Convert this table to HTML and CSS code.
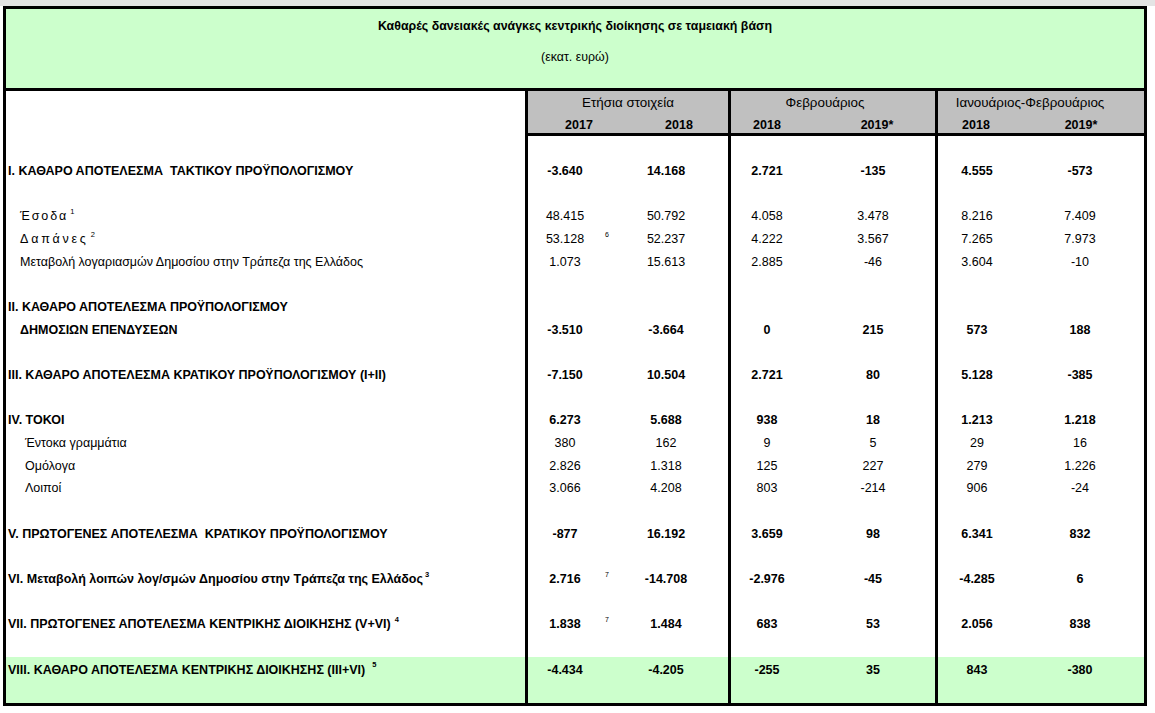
FILE: index.html
```html
<!DOCTYPE html>
<html lang="el">
<head>
<meta charset="utf-8">
<title>Καθαρές δανειακές ανάγκες κεντρικής διοίκησης</title>
<link rel="stylesheet" href="styles.css">
</head>
<body>
<div class="topbar"></div>
<div class="sheet">
  <div class="title">
    <div class="title-main">Καθαρές δανειακές ανάγκες κεντρικής διοίκησης σε ταμειακή βάση</div>
    <div class="title-sub">(εκατ. ευρώ)</div>
  </div>

  <div class="row head">
    <div class="lbl"></div>
    <div class="grp g1">
      <div class="grp-name">Ετήσια στοιχεία</div>
      <div class="years"><span class="y1">2017</span><span class="y2">2018</span></div>
    </div>
    <div class="grp g2">
      <div class="grp-name">Φεβρουάριος</div>
      <div class="years"><span class="y1">2018</span><span class="y2">2019*</span></div>
    </div>
    <div class="grp g3">
      <div class="grp-name">Ιανουάριος-Φεβρουάριος</div>
      <div class="years"><span class="y1">2018</span><span class="y2">2019*</span></div>
    </div>
  </div>

  <div class="tbody">
    <div class="row"><div class="lbl"></div><div class="n s"></div><div class="fn"></div><div class="n cb"></div><div class="n s"></div><div class="n cd"></div><div class="n s"></div><div class="n"></div></div>

    <div class="row bold"><div class="lbl">I. ΚΑΘΑΡΟ ΑΠΟΤΕΛΕΣΜΑ&nbsp; ΤΑΚΤΙΚΟΥ ΠΡΟΫΠΟΛΟΓΙΣΜΟΥ</div><div class="n s">-3.640</div><div class="fn"></div><div class="n cb">14.168</div><div class="n s">2.721</div><div class="n cd">-135</div><div class="n s">4.555</div><div class="n">-573</div></div>

    <div class="row"><div class="lbl"></div><div class="n s"></div><div class="fn"></div><div class="n cb"></div><div class="n s"></div><div class="n cd"></div><div class="n s"></div><div class="n"></div></div>

    <div class="row"><div class="lbl ind1"><span class="sp1">Έσοδα</span><sup class="sup">1</sup></div><div class="n s">48.415</div><div class="fn"></div><div class="n cb">50.792</div><div class="n s">4.058</div><div class="n cd">3.478</div><div class="n s">8.216</div><div class="n">7.409</div></div>

    <div class="row"><div class="lbl ind1"><span class="sp2">Δαπάνες</span><sup class="sup">2</sup></div><div class="n s">53.128</div><div class="fn"><sup class="fnote">6</sup></div><div class="n cb">52.237</div><div class="n s">4.222</div><div class="n cd">3.567</div><div class="n s">7.265</div><div class="n">7.973</div></div>

    <div class="row"><div class="lbl ind1">Μεταβολή λογαριασμών Δημοσίου στην Τράπεζα της Ελλάδος</div><div class="n s">1.073</div><div class="fn"></div><div class="n cb">15.613</div><div class="n s">2.885</div><div class="n cd">-46</div><div class="n s">3.604</div><div class="n">-10</div></div>

    <div class="row"><div class="lbl"></div><div class="n s"></div><div class="fn"></div><div class="n cb"></div><div class="n s"></div><div class="n cd"></div><div class="n s"></div><div class="n"></div></div>

    <div class="row bold"><div class="lbl">II. ΚΑΘΑΡΟ ΑΠΟΤΕΛΕΣΜΑ ΠΡΟΫΠΟΛΟΓΙΣΜΟΥ</div><div class="n s"></div><div class="fn"></div><div class="n cb"></div><div class="n s"></div><div class="n cd"></div><div class="n s"></div><div class="n"></div></div>

    <div class="row bold"><div class="lbl ind0">ΔΗΜΟΣΙΩΝ ΕΠΕΝΔΥΣΕΩΝ</div><div class="n s">-3.510</div><div class="fn"></div><div class="n cb">-3.664</div><div class="n s">0</div><div class="n cd">215</div><div class="n s">573</div><div class="n">188</div></div>

    <div class="row"><div class="lbl"></div><div class="n s"></div><div class="fn"></div><div class="n cb"></div><div class="n s"></div><div class="n cd"></div><div class="n s"></div><div class="n"></div></div>

    <div class="row bold"><div class="lbl">III. ΚΑΘΑΡΟ ΑΠΟΤΕΛΕΣΜΑ ΚΡΑΤΙΚΟΥ ΠΡΟΫΠΟΛΟΓΙΣΜΟΥ (I+II)</div><div class="n s">-7.150</div><div class="fn"></div><div class="n cb">10.504</div><div class="n s">2.721</div><div class="n cd">80</div><div class="n s">5.128</div><div class="n">-385</div></div>

    <div class="row"><div class="lbl"></div><div class="n s"></div><div class="fn"></div><div class="n cb"></div><div class="n s"></div><div class="n cd"></div><div class="n s"></div><div class="n"></div></div>

    <div class="row bold"><div class="lbl">IV. ΤΟΚΟΙ</div><div class="n s">6.273</div><div class="fn"></div><div class="n cb">5.688</div><div class="n s">938</div><div class="n cd">18</div><div class="n s">1.213</div><div class="n">1.218</div></div>

    <div class="row"><div class="lbl ind2">Έντοκα γραμμάτια</div><div class="n s">380</div><div class="fn"></div><div class="n cb">162</div><div class="n s">9</div><div class="n cd">5</div><div class="n s">29</div><div class="n">16</div></div>

    <div class="row"><div class="lbl ind2">Ομόλογα</div><div class="n s">2.826</div><div class="fn"></div><div class="n cb">1.318</div><div class="n s">125</div><div class="n cd">227</div><div class="n s">279</div><div class="n">1.226</div></div>

    <div class="row"><div class="lbl ind2">Λοιποί</div><div class="n s">3.066</div><div class="fn"></div><div class="n cb">4.208</div><div class="n s">803</div><div class="n cd">-214</div><div class="n s">906</div><div class="n">-24</div></div>

    <div class="row"><div class="lbl"></div><div class="n s"></div><div class="fn"></div><div class="n cb"></div><div class="n s"></div><div class="n cd"></div><div class="n s"></div><div class="n"></div></div>

    <div class="row bold"><div class="lbl">V. ΠΡΩΤΟΓΕΝΕΣ ΑΠΟΤΕΛΕΣΜΑ&nbsp; ΚΡΑΤΙΚΟΥ ΠΡΟΫΠΟΛΟΓΙΣΜΟΥ</div><div class="n s">-877</div><div class="fn"></div><div class="n cb">16.192</div><div class="n s">3.659</div><div class="n cd">98</div><div class="n s">6.341</div><div class="n">832</div></div>

    <div class="row"><div class="lbl"></div><div class="n s"></div><div class="fn"></div><div class="n cb"></div><div class="n s"></div><div class="n cd"></div><div class="n s"></div><div class="n"></div></div>

    <div class="row bold"><div class="lbl">VI. Μεταβολή λοιπών λογ/σμών Δημοσίου στην Τράπεζα της Ελλάδος<sup class="sup">3</sup></div><div class="n s">2.716</div><div class="fn"><sup class="fnote">7</sup></div><div class="n cb">-14.708</div><div class="n s">-2.976</div><div class="n cd">-45</div><div class="n s">-4.285</div><div class="n">6</div></div>

    <div class="row"><div class="lbl"></div><div class="n s"></div><div class="fn"></div><div class="n cb"></div><div class="n s"></div><div class="n cd"></div><div class="n s"></div><div class="n"></div></div>

    <div class="row bold"><div class="lbl">VII. ΠΡΩΤΟΓΕΝΕΣ ΑΠΟΤΕΛΕΣΜΑ ΚΕΝΤΡΙΚΗΣ ΔΙΟΙΚΗΣΗΣ (V+VI)<sup class="sup sup-gap">4</sup></div><div class="n s">1.838</div><div class="fn"><sup class="fnote">7</sup></div><div class="n cb">1.484</div><div class="n s">683</div><div class="n cd">53</div><div class="n s">2.056</div><div class="n">838</div></div>

    <div class="row"><div class="lbl"></div><div class="n s"></div><div class="fn"></div><div class="n cb"></div><div class="n s"></div><div class="n cd"></div><div class="n s"></div><div class="n"></div></div>

    <div class="row bold green"><div class="lbl">VIII. ΚΑΘΑΡΟ ΑΠΟΤΕΛΕΣΜΑ ΚΕΝΤΡΙΚΗΣ ΔΙΟΙΚΗΣΗΣ (III+VI)<sup class="sup sup-gap2">5</sup></div><div class="n s">-4.434</div><div class="fn"></div><div class="n cb">-4.205</div><div class="n s">-255</div><div class="n cd">35</div><div class="n s">843</div><div class="n">-380</div></div>

    <div class="row green"><div class="lbl"></div><div class="n s"></div><div class="fn"></div><div class="n cb"></div><div class="n s"></div><div class="n cd"></div><div class="n s"></div><div class="n"></div></div>
  </div>
</div>
</body>
</html>
```

FILE: styles.css
```css
html, body {
  margin: 0;
  padding: 0;
  background: #ffffff;
}

body {
  font-family: "Liberation Sans", Arial, sans-serif;
  font-size: 12.5px;
  color: #000;
  width: 1155px;
  height: 713px;
  overflow: hidden;
}

.topbar {
  height: 6px;
  background: #e4e4e4;
}

.sheet {
  box-sizing: border-box;
  width: 1144px;
  margin-left: 3px;
  border: 3px solid #000;
}

.title {
  box-sizing: border-box;
  height: 82px;
  background: #ccffcc;
  border-bottom: 3px solid #000;
  padding-top: 10px;
  text-align: center;
}

.title-main {
  font-weight: bold;
  font-size: 12.4px;
  line-height: 14px;
}

.title-sub {
  margin-top: 17px;
  font-size: 12.4px;
  line-height: 14px;
}

.row {
  display: grid;
  grid-template-columns: 519px 77px 10px 116px 75px 132px 81px 128px;
  height: 22.68px;
}

.row > div {
  box-sizing: border-box;
  display: flex;
  align-items: center;
  white-space: nowrap;
  min-width: 0;
  padding-top: 2px;
}

.row.bold {
  font-weight: bold;
}

.row.green {
  background: #ccffcc;
}

.lbl {
  padding-left: 2px;
}

.lbl.ind0 { padding-left: 14px; }
.lbl.ind1 { padding-left: 14px; }
.lbl.ind2 { padding-left: 19px; }

.sp1 {
  letter-spacing: 1.9px;
}

.sp2 {
  letter-spacing: 2.8px;
}

.n {
  justify-content: center;
}

.n.s {
  border-left: 3px solid #000;
}

.n.cb {
  padding-right: 8px;
}

.n.cd {
  padding-left: 8px;
}

.fn {
  justify-content: center;
}

.sup {
  font-size: 7.5px;
  font-weight: normal;
  position: relative;
  top: -5px;
  margin-left: 2px;
  align-self: center;
}

.row.bold .sup {
  font-weight: bold;
}

.sup-gap { margin-left: 4px; }
.sup-gap2 { margin-left: 7px; }

.fnote {
  font-size: 7px;
  font-weight: normal;
  position: relative;
  top: -5px;
}

/* header */
.row.head {
  height: 45px;
}

.row.head > .grp {
  display: block;
  border-left: 3px solid #000;
  border-bottom: 3px solid #000;
  background: #c0c0c0;
  height: 45px;
  padding-top: 0;
}

.grp.g1 { grid-column: 2 / span 3; }
.grp.g2 { grid-column: 5 / span 2; }
.grp.g3 { grid-column: 7 / span 2; }

.grp-name {
  height: 21px;
  line-height: 24px;
  text-align: center;
  font-size: 13.4px;
}

.g2 .grp-name { padding-right: 16px; }
.g3 .grp-name { padding-right: 22px; }

.years {
  display: flex;
  font-weight: bold;
  height: 21px;
  line-height: 26px;
}

.years span {
  display: block;
  text-align: center;
  box-sizing: border-box;
}

.g1 .y1 { width: 102px; }
.g1 .y2 { width: 98px; }
.g2 .y1 { width: 72px; }
.g2 .y2 { width: 132px; padding-left: 16px; }
.g3 .y1 { width: 76px; }
.g3 .y2 { width: 130px; padding-left: 4px; }
```
